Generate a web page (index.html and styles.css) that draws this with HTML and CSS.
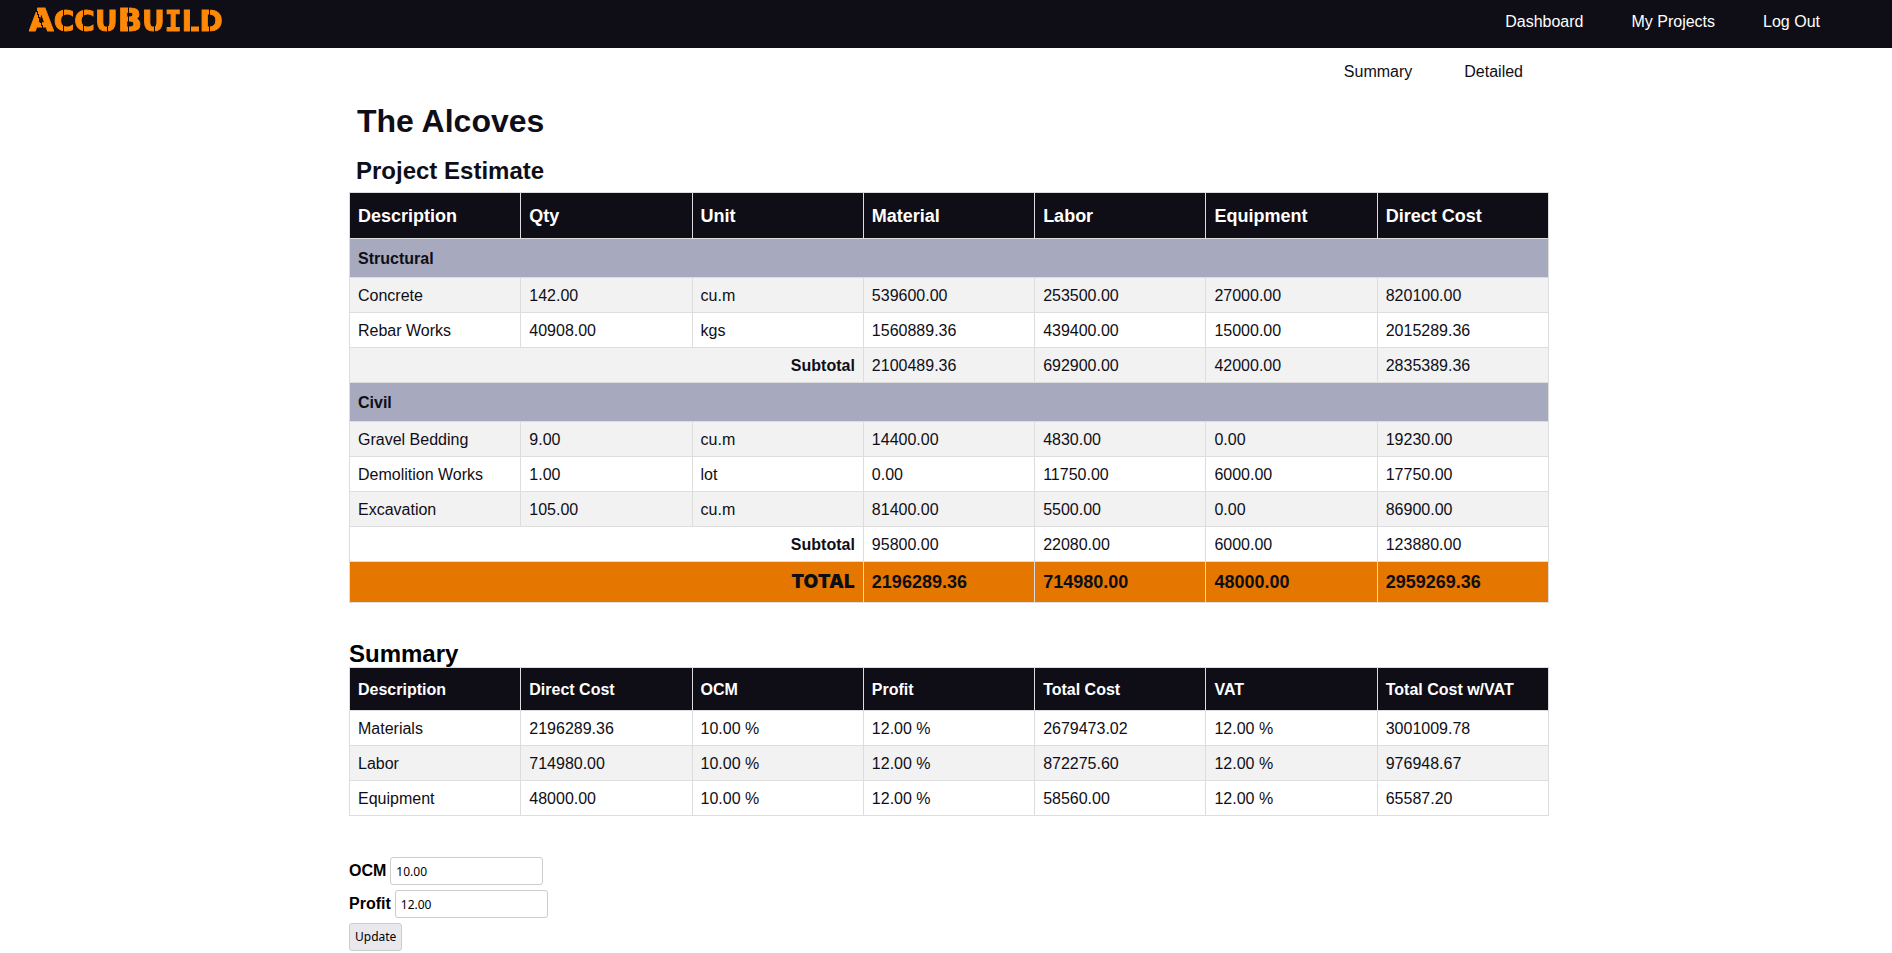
FILE: index.html
```html
<!DOCTYPE html>
<html lang="en">
<head>
<meta charset="utf-8">
<title>AccuBuild - The Alcoves</title>
<link rel="stylesheet" href="styles.css">
</head>
<body>
<header class="topbar">
  <a class="logo" href="#" aria-label="AccuBuild"><span class="cap cut-a">A</span><span class="cut-c">C</span><span class="cut-c">C</span><span class="cut-u">U</span><span class="cap cut-b">B</span><span class="cut-u">U</span><span class="slab">I</span><span class="cut-l">L</span><span class="cut-d">D</span></a>
  <nav class="mainnav">
    <a href="#">Dashboard</a>
    <a href="#">My Projects</a>
    <a href="#">Log Out</a>
  </nav>
</header>
<main class="page">
  <nav class="subnav">
    <a href="#">Summary</a>
    <a href="#">Detailed</a>
  </nav>
  <h1 class="project">The Alcoves</h1>
  <h2 class="heading indented">Project Estimate</h2>
  <table class="grid estimate">
    <thead>
      <tr><th>Description</th><th>Qty</th><th>Unit</th><th>Material</th><th>Labor</th><th>Equipment</th><th>Direct Cost</th></tr>
    </thead>
    <tbody>
      <tr class="section"><th colspan="7">Structural</th></tr>
      <tr class="shade"><td>Concrete</td><td>142.00</td><td>cu.m</td><td>539600.00</td><td>253500.00</td><td>27000.00</td><td>820100.00</td></tr>
      <tr><td>Rebar Works</td><td>40908.00</td><td>kgs</td><td>1560889.36</td><td>439400.00</td><td>15000.00</td><td>2015289.36</td></tr>
      <tr class="shade"><th class="sum" colspan="3">Subtotal</th><td>2100489.36</td><td>692900.00</td><td>42000.00</td><td>2835389.36</td></tr>
      <tr class="section"><th colspan="7">Civil</th></tr>
      <tr class="shade"><td>Gravel Bedding</td><td>9.00</td><td>cu.m</td><td>14400.00</td><td>4830.00</td><td>0.00</td><td>19230.00</td></tr>
      <tr><td>Demolition Works</td><td>1.00</td><td>lot</td><td>0.00</td><td>11750.00</td><td>6000.00</td><td>17750.00</td></tr>
      <tr class="shade"><td>Excavation</td><td>105.00</td><td>cu.m</td><td>81400.00</td><td>5500.00</td><td>0.00</td><td>86900.00</td></tr>
      <tr><th class="sum" colspan="3">Subtotal</th><td>95800.00</td><td>22080.00</td><td>6000.00</td><td>123880.00</td></tr>
      <tr class="total"><th class="sum" colspan="3">TOTAL</th><td>2196289.36</td><td>714980.00</td><td>48000.00</td><td>2959269.36</td></tr>
    </tbody>
  </table>
  <h2 class="heading summary-heading">Summary</h2>
  <table class="grid">
    <thead>
      <tr><th>Description</th><th>Direct Cost</th><th>OCM</th><th>Profit</th><th>Total Cost</th><th>VAT</th><th>Total Cost w/VAT</th></tr>
    </thead>
    <tbody>
      <tr><td>Materials</td><td>2196289.36</td><td>10.00 %</td><td>12.00 %</td><td>2679473.02</td><td>12.00 %</td><td>3001009.78</td></tr>
      <tr class="shade"><td>Labor</td><td>714980.00</td><td>10.00 %</td><td>12.00 %</td><td>872275.60</td><td>12.00 %</td><td>976948.67</td></tr>
      <tr><td>Equipment</td><td>48000.00</td><td>10.00 %</td><td>12.00 %</td><td>58560.00</td><td>12.00 %</td><td>65587.20</td></tr>
    </tbody>
  </table>
  <form class="rates">
    <div class="field"><label for="ocm">OCM</label><input id="ocm" type="text" value="10.00"></div>
    <div class="field"><label for="profit">Profit</label><input id="profit" type="text" value="12.00"></div>
    <button type="button">Update</button>
  </form>
</main>
</body>
</html>
```

FILE: styles.css
```css
* { box-sizing: border-box; }

body {
  margin: 0;
  background: #fff;
  color: #0f0e17;
  font: 16px/18px "Liberation Sans", Arial, sans-serif;
}

a { color: inherit; text-decoration: none; }

.topbar {
  display: flex;
  justify-content: space-between;
  align-items: flex-start;
  height: 48px;
  padding: 0 72px 0 29px;
  background: #0f0e17;
  color: #fffffe;
}

.logo {
  display: flex;
  align-items: baseline;
  padding-top: 4px;
  font: 700 28px/32px "DejaVu Sans", sans-serif;
}

/* Each letter is filled with a gradient whose gaps form the stencil bridges. */
.logo span {
  color: transparent;
  background-color: #ff8906;
  -webkit-background-clip: text;
  background-clip: text;
  -webkit-text-stroke: 1px transparent;
}
.logo .cap { font-size: 32px; }
.logo .slab { font-family: "DejaVu Sans Mono", monospace; }
.logo .cut-a { background-image: linear-gradient(70deg, transparent 44%, #0f0e17 44% 48%, transparent 48%); }
.logo .cut-c { background-image: linear-gradient(90deg, transparent 44%, #0f0e17 44% 49%, transparent 49%); }
.logo .cut-u { background-image: linear-gradient(90deg, transparent 52%, #0f0e17 52% 57%, transparent 57%); }
.logo .cut-b { background-image: linear-gradient(90deg, transparent 40%, #0f0e17 40% 44%, transparent 44%); }
.logo .cut-l { background-image: linear-gradient(90deg, transparent 48%, #0f0e17 48% 54%, transparent 54%); }
.logo .cut-d { background-image: linear-gradient(90deg, transparent 40%, #0f0e17 40% 45%, transparent 45%); }

.mainnav { display: flex; gap: 48px; padding-top: 13px; }

.page {
  max-width: 1206px;
  margin: 0 auto;
  padding-left: 6px;
}

.subnav {
  display: flex;
  justify-content: flex-end;
  gap: 52px;
  padding: 15px 26px 0 0;
}

.project { margin: 22px 0 0 8px; font-size: 32px; line-height: 36px; }
.heading { margin: 0; font-size: 24px; line-height: 28px; color: #000; }
.indented { margin: 18px 0 7px 7px; color: #0f0e17; }
.summary-heading { margin-top: 37px; line-height: 27px; }

.grid { width: 100%; table-layout: fixed; border-collapse: collapse; }
.grid th, .grid td { padding: 9px 8px 7px; border: 1px solid #ddd; text-align: left; }
.grid thead th { padding: 13px 8px 11px; background: #0f0e17; color: #fffffe; }
.estimate thead th { font-size: 18px; line-height: 21px; }
.grid .section th { padding: 11px 8px 9px; background: #a7a9be; }
.grid .shade { background: #f2f2f2; }
.grid .sum { text-align: right; }
.grid .total { background: #e57700; }
.grid .total th, .grid .total td { padding: 10px 8px; font-size: 18px; font-weight: 700; line-height: 20px; }
.grid .total .sum { font-family: Inter, sans-serif; font-size: 19px; font-weight: 900; }

.rates { display: grid; justify-items: start; gap: 5px; margin-top: 41px; color: #000; }
.field { display: flex; align-items: center; gap: 4px; font-weight: 700; }
.field input, .rates button {
  height: 28px;
  border: 1px solid #ccc;
  border-radius: 3px;
  padding: 0 5px;
  background: #fff;
  color: #000;
  font: 12px/18px "Noto Sans", sans-serif;
}
.field input { width: 153px; }
.rates button { background: #e9e9ed; }
```
